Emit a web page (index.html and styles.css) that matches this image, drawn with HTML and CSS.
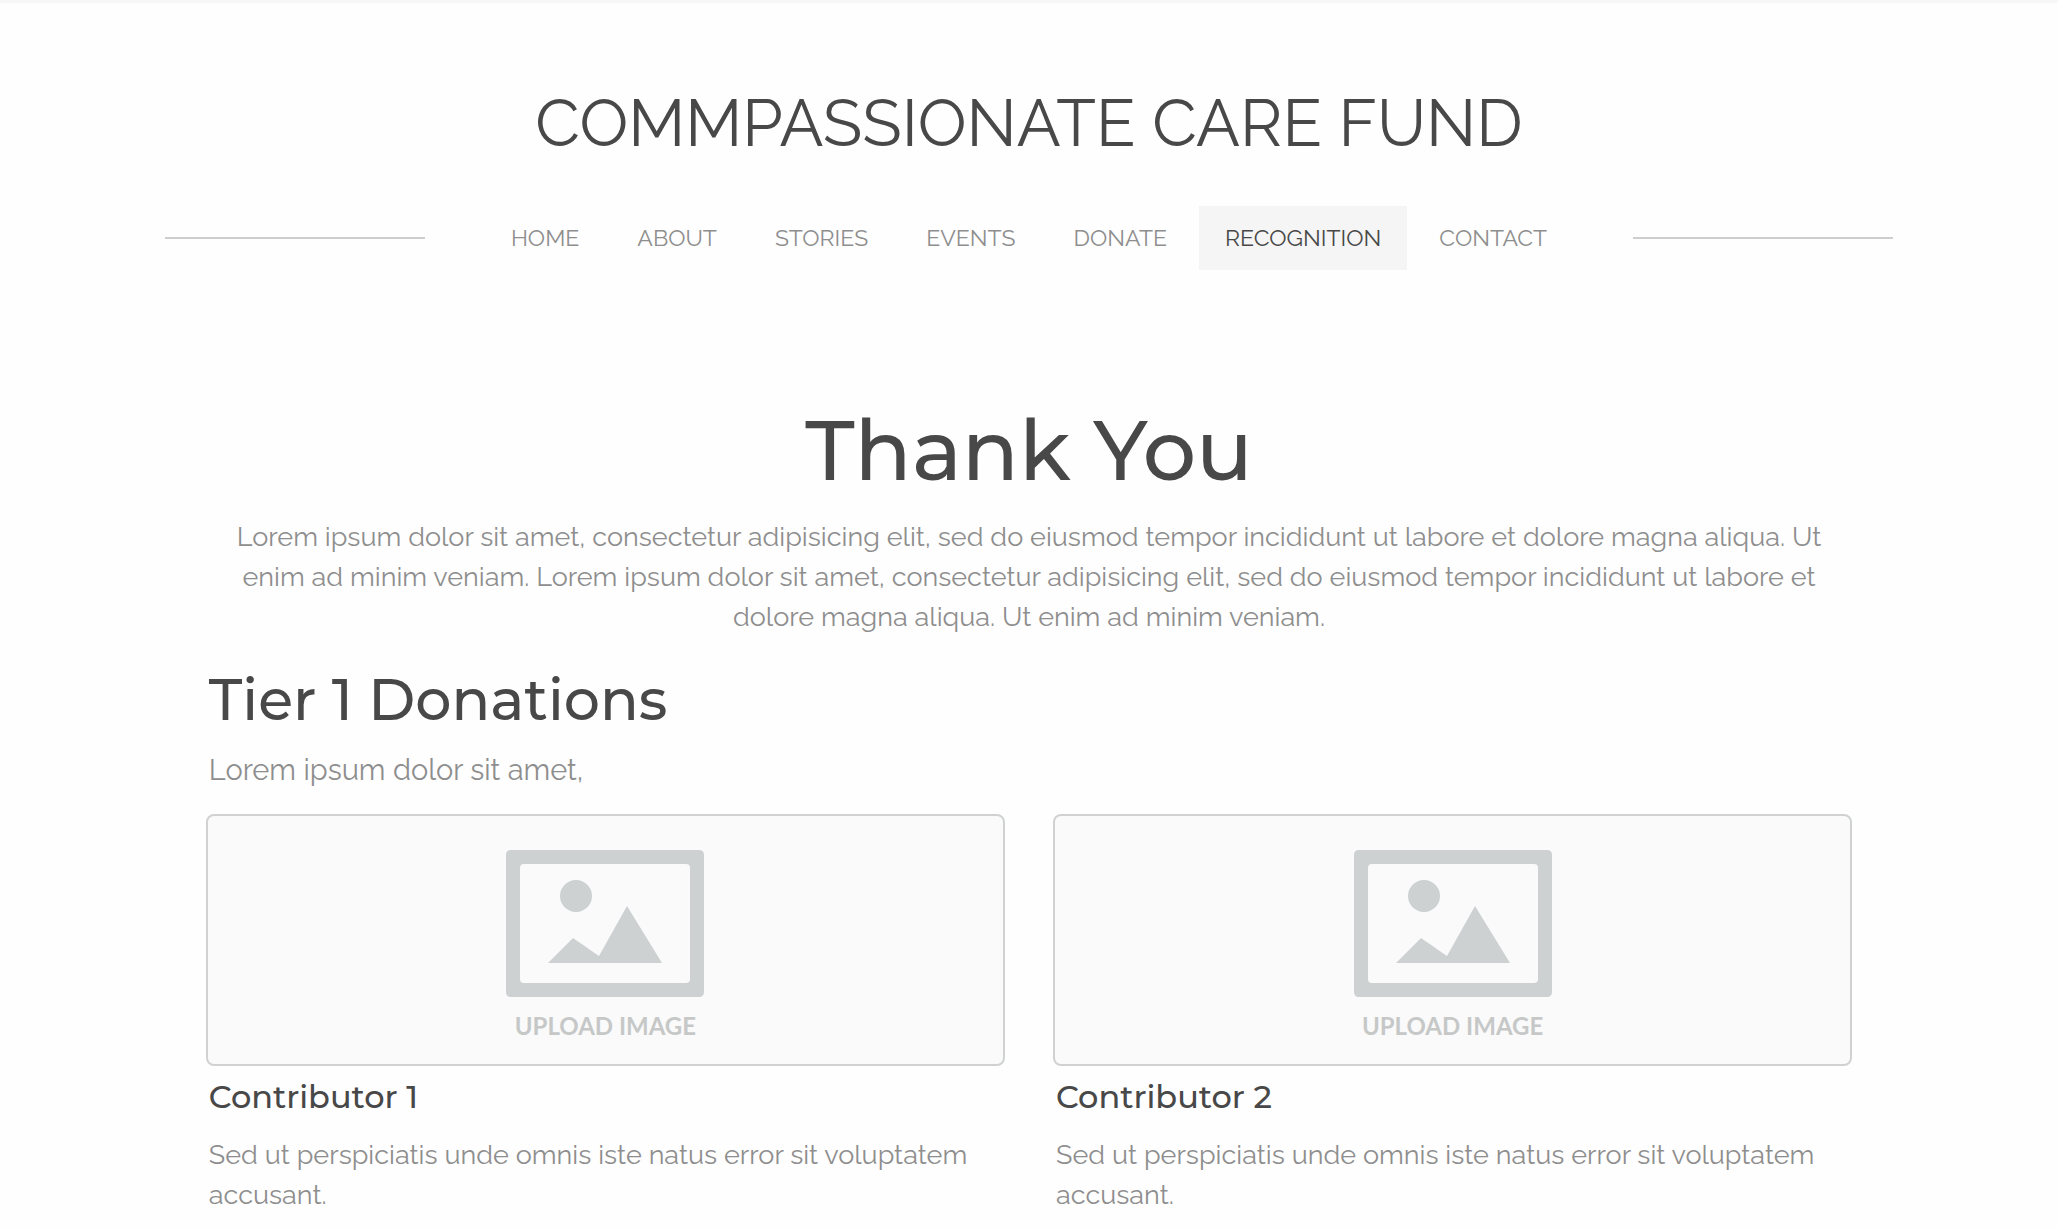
FILE: index.html
```html
<!DOCTYPE html>
<html lang="en">
<head>
  <meta charset="UTF-8">
  <meta name="viewport" content="width=device-width, initial-scale=1">
  <title>Commpassionate Care Fund - Recognition</title>
  <link rel="stylesheet" href="styles.css">
</head>
<body>
  <header class="site-header">
    <div class="site-title">COMMPASSIONATE CARE FUND</div>

    <nav class="site-nav">
      <ul class="nav-list">
        <li><a href="#home">HOME</a></li>
        <li><a href="#about">ABOUT</a></li>
        <li><a href="#stories">STORIES</a></li>
        <li><a href="#events">EVENTS</a></li>
        <li><a href="#donate">DONATE</a></li>
        <li><a href="#recognition" class="active">RECOGNITION</a></li>
        <li><a href="#contact">CONTACT</a></li>
      </ul>
    </nav>
  </header>

  <main class="content">
    <section class="intro">
      <h1>Thank You</h1>
      <p>Lorem ipsum dolor sit amet, consectetur adipisicing elit, sed do eiusmod tempor incididunt ut labore et dolore magna aliqua. Ut enim ad minim veniam. Lorem ipsum dolor sit amet, consectetur adipisicing elit, sed do eiusmod tempor incididunt ut labore et dolore magna aliqua. Ut enim ad minim veniam.</p>
    </section>

    <section class="tier">
      <h2>Tier 1 Donations</h2>
      <p class="tier-text">Lorem ipsum dolor sit amet,</p>

      <div class="contributors">
        <article class="contributor">
          <div class="placeholder">
            <svg class="placeholder-icon" viewBox="0 0 198 147" aria-hidden="true">
              <path fill-rule="evenodd" d="M5 0H193Q198 0 198 5V142Q198 147 193 147H5Q0 147 0 142V5Q0 0 5 0ZM18 14Q14 14 14 18V129Q14 133 18 133H180Q184 133 184 129V18Q184 14 180 14Z"/>
              <circle cx="70" cy="46" r="16"/>
              <path d="M42 113L67 88L93 106L121 56L156 113Z"/>
            </svg>
            <span>UPLOAD IMAGE</span>
          </div>
          <h3>Contributor 1</h3>
          <p>Sed ut perspiciatis unde omnis iste natus error sit voluptatem accusant.</p>
        </article>

        <article class="contributor">
          <div class="placeholder">
            <svg class="placeholder-icon" viewBox="0 0 198 147" aria-hidden="true">
              <path fill-rule="evenodd" d="M5 0H193Q198 0 198 5V142Q198 147 193 147H5Q0 147 0 142V5Q0 0 5 0ZM18 14Q14 14 14 18V129Q14 133 18 133H180Q184 133 184 129V18Q184 14 180 14Z"/>
              <circle cx="70" cy="46" r="16"/>
              <path d="M42 113L67 88L93 106L121 56L156 113Z"/>
            </svg>
            <span>UPLOAD IMAGE</span>
          </div>
          <h3>Contributor 2</h3>
          <p>Sed ut perspiciatis unde omnis iste natus error sit voluptatem accusant.</p>
        </article>
      </div>
    </section>
  </main>
</body>
</html>
```
FILE: styles.css
```css
* {
  box-sizing: border-box;
}

body {
  margin: 0;
  border-top: 3px solid #f7f7f7;
  background: #fefefe;
  color: #8e8e8e;
  font-family: Raleway, Lato, sans-serif;
  font-size: 27px;
  font-weight: 400;
  line-height: 40px;
}

h1, h2, h3, p {
  margin: 0;
}

h1, h2, h3 {
  color: #484848;
  font-family: Montserrat, Inter, sans-serif;
  font-weight: 500;
}

.site-header {
  padding: 80px 8% 0;
}

.site-title {
  color: #484848;
  font-size: 65px;
  line-height: 80px;
  text-align: center;
}

/* rules on both sides of the menu */
.site-nav {
  display: flex;
  align-items: center;
  gap: 60px;
  margin-top: 43px;
}

.site-nav::before,
.site-nav::after {
  content: "";
  flex: 1;
  height: 2px;
  background: #cecece;
}

.nav-list {
  display: flex;
  gap: 6px;
  margin: 0;
  padding: 0;
  list-style: none;
}

.nav-list a {
  display: block;
  padding: 0 26px;
  color: #8e8e8e;
  font-size: 23px;
  line-height: 64px;
  text-decoration: none;
}

.nav-list a.active {
  background: #f5f5f5;
  color: #484848;
}

.content {
  padding: 130px 10% 24px;
}

.intro {
  padding: 0 24px;
  text-align: center;
}

h1 {
  font-size: 84px;
  line-height: 100px;
}

.intro p {
  margin-top: 17px;
}

.tier {
  margin-top: 27px;
}

h2 {
  padding-left: 3px;
  font-size: 57px;
  line-height: 72px;
}

.tier-text {
  margin-top: 14px;
  padding-left: 3px;
  font-size: 29px;
}

.contributors {
  display: grid;
  grid-template-columns: 1fr 1fr;
  gap: 48px;
  margin-top: 24px;
}

.placeholder {
  display: flex;
  flex-direction: column;
  align-items: center;
  padding: 34px 0 18px;
  border: 2px solid #d0d2d2;
  border-radius: 8px;
  background: #fafafa;
  color: #c6c8c8;
  font-family: "Proxima Nova", Lato, sans-serif;
  font-size: 24px;
  font-weight: 700;
}

.placeholder-icon {
  width: 198px;
  height: 147px;
  margin-bottom: 9px;
  fill: #ced1d2;
}

h3 {
  margin-top: 11px;
  padding-left: 3px;
  font-size: 32px;
  line-height: 40px;
}

.contributor p {
  margin-top: 18px;
  padding-left: 3px;
}
```
